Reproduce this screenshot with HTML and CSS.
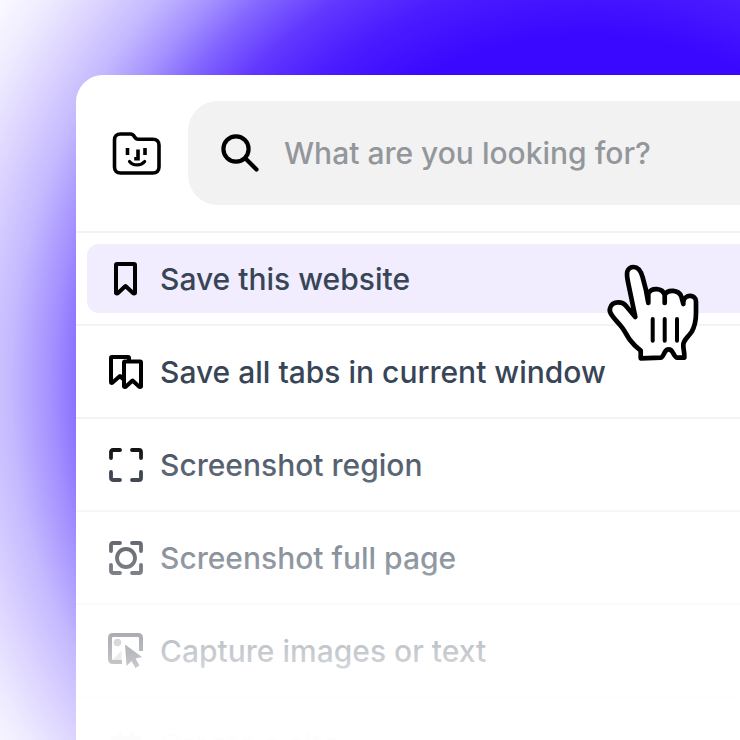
FILE: index.html
```html
<!DOCTYPE html>
<html lang="en">
<head>
  <meta charset="UTF-8">
  <meta name="viewport" content="width=device-width, initial-scale=1.0">
  <title>Save this website</title>
  <link rel="stylesheet" href="styles.css">
</head>
<body>
  <main class="panel">
    <header class="header">
      <svg class="logo" viewBox="0 0 52 46" fill="none" stroke="#000" stroke-width="3.6" stroke-linecap="round" stroke-linejoin="round" aria-hidden="true">
        <path d="M9.500 4h10c2.600 0 3.300 1.400 4.300 3.200 .8 1.500 1.400 2 3.300 2H42c3.700 0 6 2.300 6 6V37c0 3.700-2.300 6-6 6H9.500c-3.700 0-6-2.300-6-6V10c0-3.700 2.300-6 6-6z"/>
        <path d="M18.500 31.500c3.600 4.600 11.500 4.600 15.200 0" stroke-width="3.2"/>
        <path d="M16.500 18v7M34 18v7M27 19.500v9.300h-3.800" stroke-linecap="butt" stroke-linejoin="miter"/>
      </svg>
      <label class="search">
        <svg class="search-icon" viewBox="0 0 40 40" fill="none" stroke="#000" stroke-width="4.200" stroke-linecap="round" aria-hidden="true">
          <circle cx="16" cy="16" r="12.600"/>
          <path d="M25.500 25.500l11 11"/>
        </svg>
        <input type="text" placeholder="What are you looking for?" aria-label="Search">
      </label>
    </header>

    <nav class="menu">
      <div class="row">
        <button class="item active">
          <svg class="icon" viewBox="0 0 36 36" fill="none" stroke="#000" stroke-width="4" stroke-linejoin="round" aria-hidden="true">
            <path d="M9 3h17q1 0 1 1v28q-1 1-2 0l-7.500-7-7.500 7q-1 1-2 0V4q0-1 1-1z"/>
          </svg>
          Save this website
        </button>
      </div>
      <div class="row">
        <button class="item">
          <svg class="icon" viewBox="0 0 36 36" fill="none" stroke="#000" stroke-width="4" stroke-linejoin="round" aria-hidden="true">
            <path d="M21 7V4q0-1-1-1H4q-1 0-1 1v24q0 1 1 1l8-7 3 3"/>
            <path d="M17 7.500h15q1 0 1 1v24q-1 1-2 0l-6.500-6-6.500 6q-1 1-2 0v-24q0-1 1-1z"/>
          </svg>
          Save all tabs in current window
        </button>
      </div>
      <div class="row">
        <button class="item">
          <svg class="icon" viewBox="0 0 36 36" fill="none" stroke="#000" stroke-width="3.800" stroke-linecap="round" stroke-linejoin="round" aria-hidden="true">
            <path d="M3 11V5q0-2 2-2h7M24 3h7q2 0 2 2v6"/>
            <path d="M33 25v6q0 2-2 2h-7M12 33H5q-2 0-2-2v-6" stroke="#111a28"/>
          </svg>
          Screenshot region
        </button>
      </div>
      <div class="row">
        <button class="item">
          <svg class="icon" viewBox="0 0 36 36" fill="none" stroke="#050d1a" stroke-width="3.800" stroke-linecap="round" stroke-linejoin="round" aria-hidden="true">
            <path d="M3 11V5q0-2 2-2h7M24 3h7q2 0 2 2v6M33 25v6q0 2-2 2h-7M12 33H5q-2 0-2-2v-6"/>
            <circle cx="18" cy="18" r="9"/>
          </svg>
          Screenshot full page
        </button>
      </div>
      <div class="row">
        <button class="item">
          <svg class="icon" viewBox="0 0 36 36" fill="#050d1a" aria-hidden="true">
            <path d="M14 29H5q-3 0-3-3V5q0-3 3-3h25q3 0 3 3v13" fill="none" stroke="#050d1a" stroke-width="4"/>
            <circle cx="9.500" cy="9.500" r="3.800" opacity=".5"/>
            <path d="M4 27.500l9.500-10v10z" opacity=".3"/>
            <path d="M17 11.500L34 24l-6.500 1.500 4 7-4 2.500-4-7-5 5z"/>
          </svg>
          Capture images or text
        </button>
      </div>
      <div class="row">
        <button class="item">
          <svg class="icon" viewBox="0 0 36 36" fill="none" stroke="#050d1a" stroke-width="4" stroke-linecap="round" stroke-linejoin="round" aria-hidden="true">
            <path d="M12 8v4M24 8v4M5 12h26v20H5z"/>
          </svg>
          Create a site
        </button>
      </div>
    </nav>
  </main>

  <svg class="pointer" viewBox="0 0 94 100" fill="#fff" stroke="#000" stroke-width="4.700" stroke-linecap="round" stroke-linejoin="round" aria-hidden="true">
    <path d="M29.300 55L22 20C21 15 20.700 12 21.300 9.500 22.500 6.500 25 5 27.500 5c4.500 0 7.500 4 9.200 10.500C39 23 41 32 42.300 41V31.500c3-6 14-6 16.400 1.500V41V33c3-6 14-5.500 16.600 1.500L77.300 42V40c1-8 12.700-8 12.700-.5V51c0 6-1 13-4.300 18.700-4 6-8.400 8-8.400 13.300 0 6 1.500 7 1 12.700H71.300c-2 0-3.300-3-4.600-5.400-2-4-6-4-8 0-1.200 2.500-2.500 5.400-4 5.400l-20 .6v-7.600C30 85 27 82 24 78c-3-4-4.300-7.500-7.300-11.700C13 61 8.500 57.500 5.700 53 3.500 50 3.500 48 4 46.300c1-4 4.300-6 8.300-6 4 0 6.400 1.500 8.400 4.400z"/>
    <path d="M46.700 57v21.700M58.700 57v21.700M71 57v21.700" stroke-width="4"/>
  </svg>
</body>
</html>
```
FILE: styles.css
```css
:root {
  --text: #374557;
  --text-muted: #93979c;
  --surface: #f2f2f2;
  --highlight: #f1ecfe;
  --border: #f3f3f5;
  --font-sans: Inter, "Liberation Sans", sans-serif;
}

* {
  box-sizing: border-box;
  margin: 0;
  padding: 0;
}

body {
  position: relative;
  height: 100vh;
  padding: 75px 0 0 76px;
  overflow: hidden;
  font-family: var(--font-sans);
  font-size: 30px;
  font-weight: 500;
  line-height: 40px;
  color: var(--text);
  background: radial-gradient(circle at 590px 385px, #3a08ff 350px, #4a1cff 410px, #6238ff 460px, #8366ff 505px, #a592ff 540px, #c5b9ff 580px, #ddd5ff 625px, #efebff 665px, #fff 720px);
}

.panel {
  position: relative;
  height: 100%;
  background: #fff;
  border-top-left-radius: 27px;
  overflow: hidden;
}

/* fades the lower menu rows out */
.panel::after {
  content: "";
  position: absolute;
  inset: 0;
  pointer-events: none;
  background: linear-gradient(rgba(255, 255, 255, 0) 54%, rgba(255, 255, 255, 0.17) 59%, rgba(255, 255, 255, 0.44) 73%, rgba(255, 255, 255, 0.72) 87%, rgba(255, 255, 255, 0.99) 97%);
}

.header {
  display: flex;
  align-items: center;
  gap: 25px;
  height: 158px;
  padding-left: 35px;
  border-bottom: 2px solid var(--border);
}

.logo {
  flex: none;
  width: 52px;
  height: 46px;
}

.search {
  display: flex;
  flex: 1;
  align-items: center;
  gap: 24px;
  height: 104px;
  padding-left: 32px;
  background: var(--surface);
  border-radius: 30px 0 0 30px;
}

.search-icon {
  flex: none;
  width: 40px;
  height: 40px;
}

.search input {
  flex: 1;
  min-width: 0;
  border: none;
  outline: none;
  background: transparent;
  font: inherit;
  color: var(--text);
}

.search input::placeholder {
  color: var(--text-muted);
  opacity: 1;
}

.row {
  padding: 11px 0 11px 11px;
  border-bottom: 2px solid var(--border);
}

.item {
  display: flex;
  align-items: center;
  gap: 16px;
  width: 100%;
  height: 69px;
  padding-left: 21px;
  border: none;
  border-radius: 12px 0 0 12px;
  background: none;
  font: inherit;
  color: inherit;
  text-align: left;
  white-space: nowrap;
  cursor: pointer;
}

.item.active {
  background: var(--highlight);
}

.icon {
  flex: none;
  width: 36px;
  height: 36px;
}

.pointer {
  position: absolute;
  top: 262px;
  left: 606px;
  width: 94px;
  height: 100px;
  pointer-events: none;
}
```
